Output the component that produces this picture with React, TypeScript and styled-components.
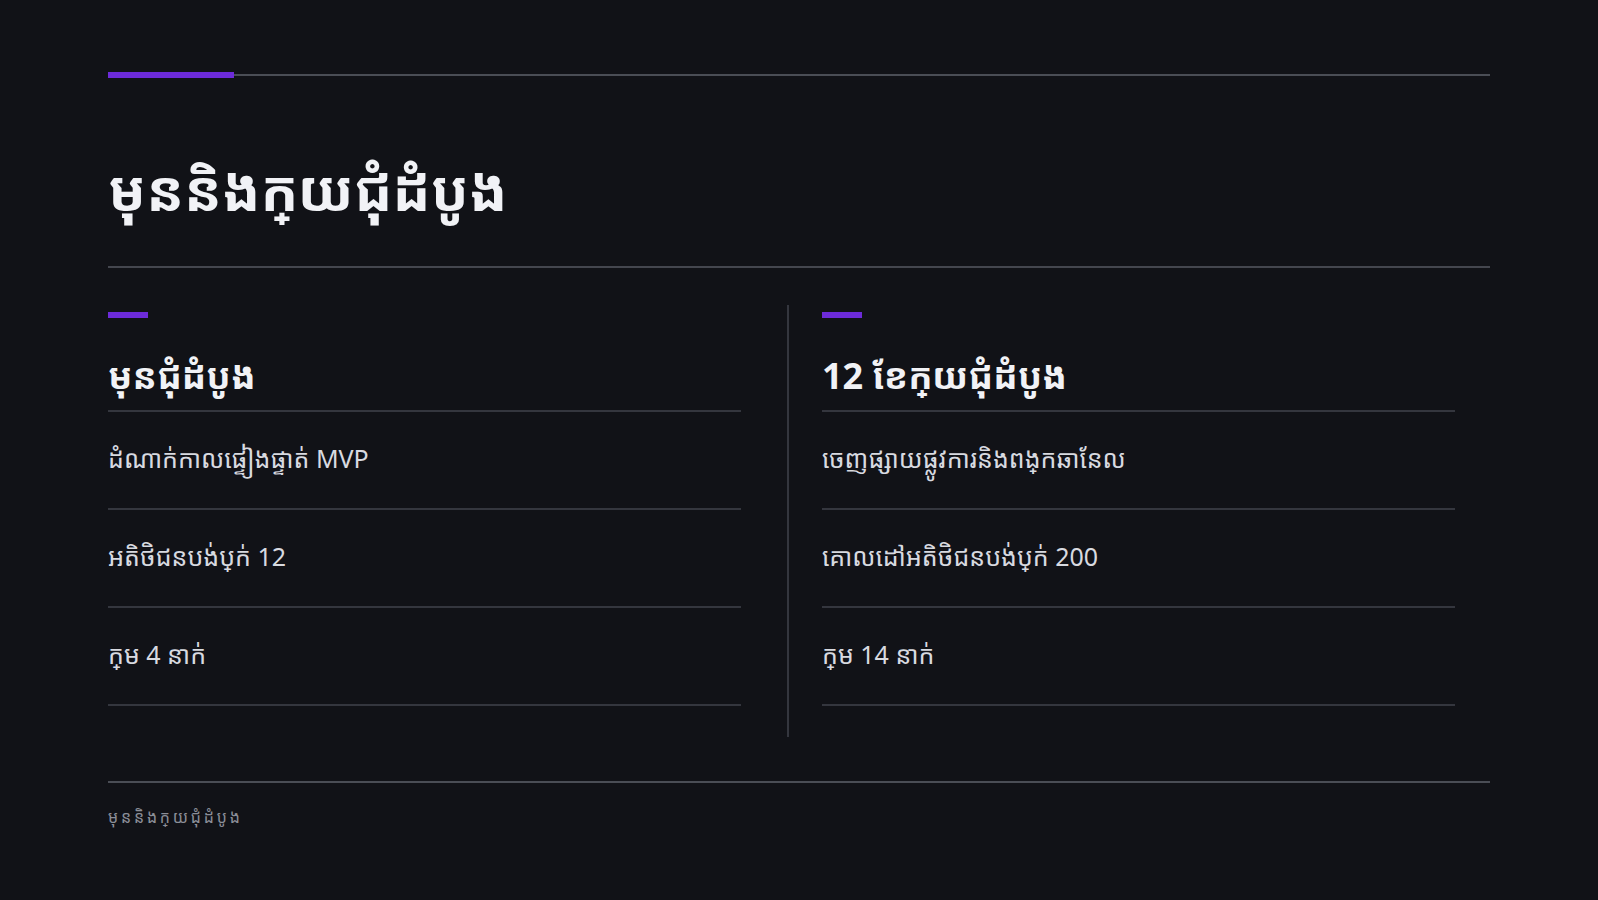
import React from 'react';
import styled, { createGlobalStyle } from 'styled-components';

const GlobalStyle = createGlobalStyle`
  * { box-sizing: border-box; margin: 0; padding: 0; }
  html, body { background: #111217; }
  body {
    font-family: "Noto Sans", "Noto Sans Khmer", sans-serif;
    color: #eef0f4;
  }
`

interface ColumnData {
  title: string;
  items: string[];
}

const columns: ColumnData[] = [
  {
    title: 'មុនជុំដំបូង',
    items: ['ដំណាក់កាលផ្ទៀងផ្ទាត់ MVP', 'អតិថិជនបង់ប្\u200Cក់ 12', 'ក្\u200Cម 4 នាក់'],
  },
  {
    title: '12 ខែក្\u200Cយជុំដំបូង',
    items: ['ចេញផ្សាយផ្លូវការនិងពង្\u200Cកឆានែល', 'គោលដៅអតិថិជនបង់ប្\u200Cក់ 200', 'ក្\u200Cម 14 នាក់'],
  },
]

export default function App() {
  return (
    <>
      <GlobalStyle />
      <Slide>
        <TopRule>
          <Accent />
          <RuleLine />
        </TopRule>
        <Title>មុននិងក្&#x200C;យជុំដំបូង</Title>
        <Divider />
        <Columns>
          {columns.map((col, i) => (
            <Column key={i} $divided={i > 0}>
              <SmallAccent />
              <ColumnTitle>{col.title}</ColumnTitle>
              <List>
                {col.items.map((item, j) => (
                  <Item key={j}>{item}</Item>
                ))}
              </List>
            </Column>
          ))}
        </Columns>
        <Footer>មុននិងក្&#x200C;យជុំដំបូង</Footer>
      </Slide>
    </>
  )
}

const Slide = styled.div`
  width: 1598px;
  height: 900px;
  padding: 72px 108px 0 108px;
  display: flex;
  flex-direction: column;
`

const TopRule = styled.div`
  display: flex;
  align-items: center;
  height: 6px;
`

const Accent = styled.div`
  width: 126px;
  height: 6px;
  background: #6d2bd9;
`

const RuleLine = styled.div`
  flex: 1;
  height: 2px;
  background: #4a4d55;
`

const Title = styled.h1`
  margin-top: 68px;
  font-size: 56px;
  font-weight: 700;
  line-height: 86px;
  color: #f1f2f6;
`

const Divider = styled.div`
  margin-top: 34px;
  height: 2px;
  background: #44464e;
`

const Columns = styled.div`
  margin-top: 37px;
  display: grid;
  grid-template-columns: 679px 1fr;
`

const Column = styled.div<{ $divided?: boolean }>`
  padding: 7px ${p => (p.$divided ? '35px' : '46px')} 31px ${p => (p.$divided ? '33px' : '0')};
  border-left: ${p => (p.$divided ? '2px solid #34363e' : 'none')};
  display: flex;
  flex-direction: column;
`

const SmallAccent = styled.div`
  width: 40px;
  height: 6px;
  background: #6d2bd9;
`

const ColumnTitle = styled.h2`
  margin-top: 32px;
  padding-bottom: 8px;
  font-size: 36px;
  font-weight: 700;
  line-height: 52px;
  color: #f1f2f6;
  border-bottom: 2px solid #34363e;
`

const List = styled.div`
  display: flex;
  flex-direction: column;
`

const Item = styled.div`
  padding: 28px 0 32px;
  font-size: 25px;
  line-height: 36px;
  color: #d8dae0;
  border-bottom: 2px solid #34363e;
`

const Footer = styled.div`
  margin-top: 44px;
  padding-top: 23px;
  border-top: 2px solid #4a4d55;
  font-size: 16px;
  letter-spacing: 2.8px;
  color: #8b8e97;
`
